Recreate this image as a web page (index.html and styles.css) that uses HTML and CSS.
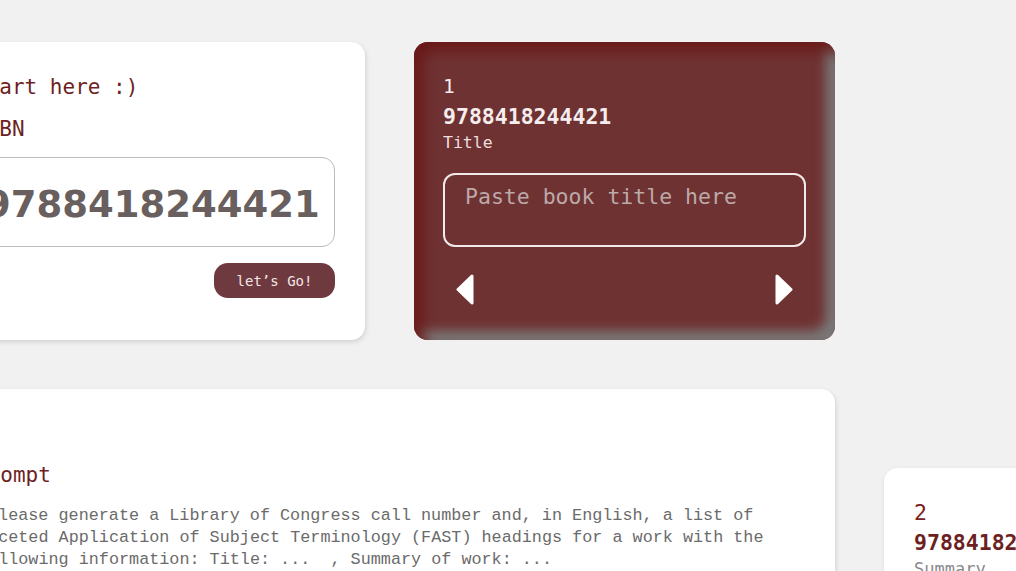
FILE: index.html
```html
<!DOCTYPE html>
<html lang="en">
<head>
<meta charset="utf-8">
<title>Call number helper</title>
<link rel="stylesheet" href="styles.css">
</head>
<body>
<main class="board">
  <section class="card start-card">
    <h2 class="heading">start here :)</h2>
    <label class="label" for="isbn">ISBN</label>
    <input id="isbn" class="isbn-input" type="text" value="9788418244421">
    <div class="actions">
      <button class="go-btn" type="button">let’s Go!</button>
    </div>
  </section>

  <section class="card step-card">
    <div class="step-num">1</div>
    <div class="step-isbn">9788418244421</div>
    <div class="step-label">Title</div>
    <textarea class="step-input" placeholder="Paste book title here"></textarea>
    <div class="step-nav">
      <svg class="arrow" width="18" height="31" viewBox="0 0 18 31"><polygon points="16,2 16,29 2,15.5" fill="#fff" stroke="#fff" stroke-width="3" stroke-linejoin="round"/></svg>
      <svg class="arrow" width="18" height="31" viewBox="0 0 18 31"><polygon points="2,2 2,29 16,15.5" fill="#fff" stroke="#fff" stroke-width="3" stroke-linejoin="round"/></svg>
    </div>
  </section>

  <div class="spacer"></div>

  <section class="card prompt-card">
    <h2 class="heading">Prompt</h2>
    <p class="prompt-text">Please generate a Library of Congress call number and, in English, a list of Faceted Application of Subject Terminology (FAST) headings for a work with the following information: Title: ...  , Summary of work: ...</p>
  </section>

  <section class="card next-card">
    <div class="next-num">2</div>
    <div class="next-isbn">9788418244421</div>
    <div class="next-label">Summary</div>
  </section>
</main>
</body>
</html>
```

FILE: styles.css
```css
html, body {
  margin: 0;
  padding: 0;
  background: #f1f1f1;
  overflow: hidden;
  width: 1016px;
  height: 571px;
}

.board {
  display: grid;
  grid-template-columns: repeat(3, 421px);
  column-gap: 49px;
  row-gap: 49px;
  margin-left: -56px;
  padding-top: 42px;
  align-items: start;
}

.card {
  background: #ffffff;
  border-radius: 14px;
  box-sizing: border-box;
  box-shadow: 1px 2px 5px rgba(0, 0, 0, 0.13);
}

.heading {
  margin: 0;
  font-family: "DejaVu Sans Mono", monospace;
  font-weight: normal;
  font-size: 21px;
  line-height: 25px;
  color: #6e1f1f;
}

/* start card */
.start-card {
  height: 298px;
  padding: 33px 30px 0 30px;
  display: flex;
  flex-direction: column;
}

.label {
  display: block;
  margin-top: 17px;
  font-family: "DejaVu Sans Mono", monospace;
  font-size: 21px;
  line-height: 25px;
  color: #6e1f1f;
}

.isbn-input {
  margin-top: 15px;
  height: 90px;
  box-sizing: border-box;
  border: 1px solid #bdbdbd;
  border-radius: 13px;
  padding: 4px 8px 0 10px;
  font-family: "DejaVu Sans", sans-serif;
  font-weight: bold;
  font-size: 37px;
  color: #685f5e;
  background: #fff;
  outline: none;
  width: 100%;
}

.actions {
  display: flex;
  justify-content: flex-end;
  margin-top: 16px;
}

.go-btn {
  width: 121px;
  height: 35px;
  border: none;
  border-radius: 14px;
  background: #6e3a40;
  color: #f3e6e6;
  font-family: "DejaVu Sans Mono", monospace;
  font-size: 14px;
  padding: 0;
}

/* step card */
.step-card {
  height: 298px;
  background: #6f3232;
  padding: 33px 29px 0 29px;
  box-shadow: inset 9px 9px 14px #6a1a1a, inset -9px -9px 12px #7b7b7b;
  color: #f5eded;
  display: flex;
  flex-direction: column;
}

.step-num {
  font-family: "DejaVu Sans Mono", monospace;
  font-size: 19.5px;
  line-height: 24px;
}

.step-isbn {
  margin-top: 5px;
  font-family: "DejaVu Sans Mono", monospace;
  font-weight: bold;
  font-size: 21.5px;
  line-height: 26px;
}

.step-label {
  margin-top: 3px;
  font-family: "DejaVu Sans Mono", monospace;
  font-size: 16.5px;
  line-height: 20px;
  color: #ecdede;
}

.step-input {
  margin-top: 20px;
  height: 74px;
  box-sizing: border-box;
  border: 2px solid #f2eaea;
  border-radius: 12px;
  background: transparent;
  padding: 8px 20px;
  font-family: "DejaVu Sans Mono", monospace;
  font-size: 21.5px;
  line-height: 28px;
  color: #fff;
  resize: none;
  outline: none;
}

.step-input::placeholder {
  color: #bca9a9;
}

.step-nav {
  display: flex;
  justify-content: space-between;
  padding: 0 13px;
  margin-top: 27px;
}

.arrow {
  display: block;
}

.spacer {
  height: 1px;
}

/* prompt card */
.prompt-card {
  grid-column: 1 / span 2;
  height: 260px;
  padding: 74px 31px 0 31px;
}

.prompt-text {
  margin: 17px 0 0 3px;
  text-indent: 10px;
  white-space: pre-wrap;
  font-family: "Liberation Mono", monospace;
  font-size: 16.8px;
  line-height: 22px;
  color: #6b6b6b;
}

/* next card */
.next-card {
  margin-top: 79px;
  height: 200px;
  padding: 32px 30px 0 30px;
}

.next-num {
  font-family: "DejaVu Sans Mono", monospace;
  font-size: 21.5px;
  line-height: 26px;
  color: #7a2222;
}

.next-isbn {
  margin-top: 4px;
  font-family: "DejaVu Sans Mono", monospace;
  font-weight: bold;
  font-size: 21.5px;
  line-height: 26px;
  color: #6e1f1f;
}

.next-label {
  margin-top: 3px;
  font-family: "DejaVu Sans Mono", monospace;
  font-size: 17px;
  line-height: 20px;
  color: #8a8a8a;
}
```
